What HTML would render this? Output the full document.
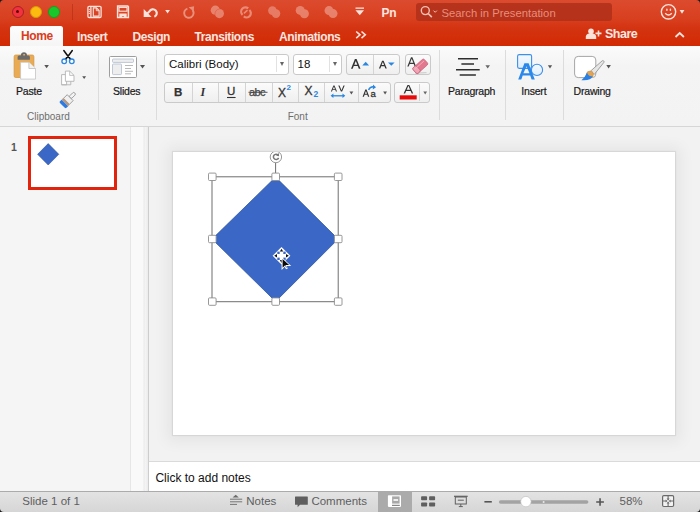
<!DOCTYPE html>
<html><head><meta charset="utf-8">
<style>
*{margin:0;padding:0;box-sizing:border-box}
html,body{width:700px;height:512px;overflow:hidden;background:#1A1A1A;font-family:"Liberation Sans",sans-serif}
.a{position:absolute}
.t{position:absolute;line-height:1;white-space:nowrap}
#top{left:0;top:0;width:700px;height:46px;background:linear-gradient(#DC4B2F,#D8401F 40%,#D43412 60%,#D12A03);border-radius:4px 4px 0 0}
.tab{font-weight:bold;font-size:12px;letter-spacing:-0.4px;color:#FBE6E0;top:30.5px}
#ribbon{left:0;top:46px;width:700px;height:80px;background:linear-gradient(#FBFBFB,#F6F6F6 14px,#F4F4F4 20px,#F3F3F3)}
.lbl{font-size:10.5px;letter-spacing:-0.2px;color:#1a1a1a;top:85.6px;-webkit-text-stroke:0.2px #1a1a1a}
.glbl{font-size:10px;color:#6E6E6E;top:111.5px}
.sep{width:1px;background:#DCDCDC}
.box{background:#fff;border:1px solid #C9C9C9;border-radius:3px}
.btn{background:linear-gradient(#FBFBFB,#EFEFEF);border:1px solid #CACACA;border-radius:3px}
.tri{width:0;height:0;border-left:2.5px solid transparent;border-right:2.5px solid transparent;border-top:4px solid #666}
</style></head><body>
<!-- title + tabs -->
<div id="top" class="a"></div>
<!-- traffic lights -->
<div class="a" style="left:11.5px;top:5.5px;width:12px;height:12px;border-radius:50%;background:#F4323D;border:1px solid #A51F27"></div>
<div class="a" style="left:15.8px;top:9.8px;width:3.4px;height:3.4px;border-radius:50%;background:#5A0808"></div>
<div class="a" style="left:29.7px;top:5.5px;width:12px;height:12px;border-radius:50%;background:#FDBB0F;border:1px solid #D69A10"></div>
<div class="a" style="left:48px;top:5.5px;width:12px;height:12px;border-radius:50%;background:#1AC72A;border:1px solid #16A020"></div>
<div class="a" style="left:72px;top:4px;width:1px;height:16px;background:rgba(150,30,10,0.35)"></div>


<!-- title bar icons -->
<svg class="a" style="left:0;top:0" width="700" height="26" viewBox="0 0 700 26">
 <g fill="none" stroke="#FBE3DC" stroke-width="1.3">
  <!-- doc/sidebar icon -->
  <rect x="87.9" y="6.3" width="13.2" height="11.2" rx="1.2"/>
  <line x1="90.9" y1="6.3" x2="90.9" y2="17.5"/>
  <path d="M93.3 7.9h3.2l2.6 2.6v5.6h-5.8z" stroke-width="1.1"/>
  <path d="M96.3 7.9v2.8h2.8" stroke-width="0.9"/>
  <!-- save -->
  <path d="M117.6 6.1h10.2l0.6 0.6v10.9h-10.8z" stroke-width="1.5"/>
  <rect x="119" y="7.4" width="8" height="3.8" stroke-width="1.1"/>
 </g>
 <g fill="#FBE3DC">
  <circle cx="89.3" cy="9.3" r="0.65"/><circle cx="89.3" cy="11.4" r="0.65"/><circle cx="89.3" cy="13.4" r="0.65"/>
  <path d="M119.3 17.6v-4.2h7.4v4.2h-2.6v-1.4h-2.2v1.4z"/>
 </g>
 <path d="M120.4 17.4v-2.9h5.2v2.9" fill="none" stroke="#C8381B" stroke-width="0"/>
 <!-- undo -->
 <path d="M147.2 13.6l2.2-2.2a3.9 3.9 0 1 1 5 5.4" fill="none" stroke="#FBE3DC" stroke-width="2.1"/>
 <path d="M143.7 8.9 v8 h7.9z" fill="#FBE3DC"/>
 <path d="M165.2 10.1h4.7l-2.35 3.5z" fill="#FBE3DC"/>
 <!-- redo (disabled) -->
 <path d="M187.4 8.6 a4.7 4.7 0 1 0 5.2 1.6" fill="none" stroke="#E8907C" stroke-width="1.9"/>
 <path d="M188.6 7.2 l5.5 -1 l-0.4 5.2z" fill="#E8907C"/>
 <!-- circles icons (disabled) -->
 <g fill="#F2A898" opacity="0.62">
  <circle cx="215.3" cy="10.2" r="4.6"/>
  <circle cx="219.4" cy="13.6" r="4.6"/>
 </g>
 <path d="M215.1 14.7a4.6 4.6 0 0 1 4.4 -5.6" fill="none" stroke="#D9482C" stroke-width="0.7" opacity="0.6"/>
 <g fill="none" stroke="#F2A898" stroke-width="2.2" opacity="0.7">
  <path d="M242.6 14.8a4.2 4.2 0 0 1 5.6 -6.4"/>
  <path d="M248.6 8.8a4.2 4.2 0 0 1 -5.6 6.4" transform="translate(0.8,1.2)"/>
 </g>
 <path d="M243.9 13.3l3.6 -3.2" stroke="#F2A898" stroke-width="1.6" opacity="0.7"/>
 <g fill="#F2A898" opacity="0.55">
  <circle cx="272.4" cy="10.6" r="4.3"/>
  <circle cx="276" cy="13.6" r="4.3"/>
 </g>
 <g fill="#F2A898" opacity="0.6">
  <circle cx="300.2" cy="10.4" r="4.5"/>
  <circle cx="304.4" cy="13.8" r="4.5"/>
 </g>
 <g fill="#F2A898" opacity="0.62">
  <circle cx="329" cy="10.6" r="4.5"/>
  <circle cx="333" cy="13.6" r="4.5"/>
 </g>
 <!-- customize -->
 <rect x="355.5" y="7.5" width="8.5" height="1.3" fill="#FBE3DC"/>
 <path d="M355.5 10.2h8.5l-4.25 5z" fill="#FBE3DC"/>
 <!-- search box -->
 <rect x="416" y="3" width="196" height="18" rx="3" fill="#B0301A" opacity="0.88"/>
 <circle cx="425.3" cy="10.6" r="4" fill="none" stroke="#F2C0B4" stroke-width="1.4"/>
 <path d="M428.2 13.5l3.6 3.6" stroke="#F2C0B4" stroke-width="1.6"/>
 <path d="M433.5 10.6l1.7 1.7l1.7-1.7" fill="none" stroke="#F2C0B4" stroke-width="1"/>
 <!-- smiley -->
 <circle cx="668.5" cy="11.8" r="7.2" fill="none" stroke="#FBE3DC" stroke-width="1.4"/>
 <ellipse cx="666.9" cy="9.7" rx="0.75" ry="1.3" fill="#FBE3DC"/><ellipse cx="670.4" cy="9.7" rx="0.75" ry="1.3" fill="#FBE3DC"/>
 <path d="M665.2 13.2q3.3 3.6 6.6 0" fill="none" stroke="#FBE3DC" stroke-width="1.3"/>
 <path d="M679.6 10h4.8l-2.4 3.8z" fill="#FBE3DC"/>
</svg>
<div class="t" style="left:381.5px;top:6.9px;font-size:12px;font-weight:bold;color:#FBE6E0;letter-spacing:-0.3px">Pn</div>
<div class="t" style="left:441.4px;top:7.5px;font-size:11.3px;color:#E68E7C">Search in Presentation</div>

<!-- tabs -->
<div class="a" style="left:10px;top:26px;width:53px;height:21px;background:linear-gradient(#FDFDFD,#F5F5F5);border-radius:2.5px 2.5px 0 0"></div>
<div class="t tab" style="left:21px;top:30.3px;color:#DB3C1C">Home</div>
<div class="t tab" style="left:77px">Insert</div>
<div class="t tab" style="left:132.4px">Design</div>
<div class="t tab" style="left:194.4px">Transitions</div>
<div class="t tab" style="left:279px">Animations</div>
<svg class="a" style="left:350px;top:26px" width="350" height="20" viewBox="350 26 350 20">
 <path d="M356.2 31.5l3.8 3.3l-3.8 3.3M361.5 31.5l3.8 3.3l-3.8 3.3" fill="none" stroke="#FBE3DC" stroke-width="1.6"/>
 <!-- share person -->
 <circle cx="591" cy="31.2" r="2.8" fill="#FBE3DC"/>
 <path d="M585.8 39v-2.2q0-2.8 3-3.4h4.4q3 .6 3 3.4V39z" fill="#FBE3DC"/>
 <path d="M595.5 33.4h6M598.5 30.4v6" stroke="#FBE3DC" stroke-width="1.6"/>
 <path d="M675.5 37l4.2-4l4.2 4" fill="none" stroke="#FBE3DC" stroke-width="1.8"/>
</svg>
<div class="t" style="left:605px;top:28px;font-size:12.5px;font-weight:bold;letter-spacing:-0.5px;color:#FBE6E0">Share</div>

<!-- ribbon -->
<div id="ribbon" class="a"></div>
<div class="a" style="left:0;top:125.5px;width:700px;height:1px;background:#D6D6D6"></div>
<div class="a sep" style="left:98px;top:50px;height:70px"></div>
<div class="a sep" style="left:156px;top:50px;height:70px"></div>
<div class="a sep" style="left:439px;top:50px;height:70px"></div>
<div class="a sep" style="left:505px;top:50px;height:70px"></div>
<div class="a sep" style="left:563px;top:50px;height:70px"></div>

<svg class="a" style="left:0;top:46px" width="700" height="80" viewBox="0 46 700 80">
 <!-- paste clipboard -->
 <rect x="14.1" y="55" width="19.8" height="22.5" rx="1.6" fill="#EAAB55" stroke="#D39540" stroke-width="0.7"/>
 <path d="M17.6 59.3v-2.3q0-1.6 1.6-1.6h1.6q0.3-3.1 3.15-3.1t3.15 3.1h1.3q1.5 0 1.5 1.6v2.3q0 0.5-0.5 0.5h-11.3q-0.5 0-0.5-0.5z" fill="#6B6B6B"/>
 <rect x="23.2" y="54" width="1.8" height="1.5" rx="0.5" fill="#E6B070"/>
 <path d="M20.6 62.2h8.3l6.6 6.6v10.3h-14.9z" fill="#fff" stroke="#C4C4C4" stroke-width="0.8"/>
 <path d="M28.9 62.2v6.3h6.6" fill="#F2F2F2" stroke="#BDBDBD" stroke-width="0.8"/>
 <path d="M44.3 65h4.6l-2.3 3.2z" fill="#555"/>
 <!-- scissors -->
 <path d="M63.9 50.6q2.4 3.6 6.8 8.8M72.2 50.6q-2.4 3.6 -6.8 8.8" fill="none" stroke="#111" stroke-width="1.7" stroke-linecap="round"/>
 <circle cx="64.2" cy="61.3" r="2.3" fill="#fff" stroke="#2A86E0" stroke-width="1.35"/>
 <circle cx="71.8" cy="61.3" r="2.3" fill="#fff" stroke="#2A86E0" stroke-width="1.35"/>
 <!-- copy -->
 <path d="M61.6 74.6h5v10.2h-5z" fill="#fff" stroke="#B3B3B3" stroke-width="0.9"/>
 <path d="M61.6 84.8h9.2v-3.5" fill="none" stroke="#B3B3B3" stroke-width="0.9"/>
 <path d="M65.4 71.1h4.3l4.3 4.3v5.9h-8.6z" fill="#fff" stroke="#B3B3B3" stroke-width="0.9"/>
 <path d="M69.7 71.1v4.3h4.3" fill="none" stroke="#B3B3B3" stroke-width="0.8"/>
 <path d="M82.2 76.2h3.9l-1.95 2.8z" fill="#555"/>
 <!-- format painter -->
 <g transform="translate(67.6,100.2) rotate(45)">
  <rect x="-1.6" y="-10.2" width="3.2" height="6.8" rx="1.5" fill="#F4F4F4" stroke="#8E8E8E" stroke-width="0.8"/>
  <path d="M-4.2 -3.6h8.4v5.2h-8.4z" fill="#F0F0F0" stroke="#8E8E8E" stroke-width="0.8"/>
  <rect x="-4.6" y="1.6" width="9.2" height="2.2" fill="#B99A80"/>
  <path d="M-4.6 3.8h9.2v2.4q0 1.2-1.2 1.2h-6.8q-1.2 0-1.2-1.2z" fill="#2F7AE0"/>
 </g>
 <!-- slides icon -->
 <rect x="109.5" y="56.5" width="27" height="21" rx="1" fill="#fff" stroke="#9E9E9E" stroke-width="1"/>
 <rect x="112.5" y="59" width="21" height="3.4" rx="0.8" fill="#EEEEEE" stroke="#A9B5C9" stroke-width="0.7"/>
 <rect x="112.5" y="64" width="9" height="10.6" rx="0.8" fill="#EEEEEE" stroke="#A9B5C9" stroke-width="0.7"/>
 <g stroke="#A6A6A6" stroke-width="0.8"><path d="M125 65.5h8M125 68.5h6M125 71.3h8M125 73.8h6"/></g>
 <path d="M140 65h5l-2.5 3.6z" fill="#555"/>
 <!-- paragraph -->
 <g stroke="#2E2E2E" stroke-width="1.5"><path d="M458 58.8h20M461.4 64h12.6M456 69.8h23.7M459.7 75.1h16.2"/></g>
 <path d="M485.4 65.2h4.6l-2.3 3.4z" fill="#666"/>
 <!-- insert icon -->
 <defs><linearGradient id="lb" x1="0" y1="0" x2="0" y2="1"><stop offset="0" stop-color="#F4F9FE"/><stop offset="1" stop-color="#DDEEFC"/></linearGradient></defs>
 <rect x="517.6" y="54.6" width="14" height="13.8" rx="1.6" fill="url(#lb)" stroke="#3C8FEA" stroke-width="1.1"/>
 <circle cx="537" cy="69.9" r="5.6" fill="url(#lb)" stroke="#3C8FEA" stroke-width="1.1"/>
 <path d="M518.2 79.6L524.4 63.2H528.6L534.8 79.6H531.6L530.2 75.4H522.7L521.3 79.6zM526.5 66.2L523.4 73.2H529.5z" fill="#2A88EA" fill-rule="evenodd"/>
 <path d="M547.9 65.2h4.2l-2.1 3.4z" fill="#555"/>
 <!-- drawing icon -->
 <rect x="574.6" y="56.4" width="21.2" height="21.2" rx="3.6" fill="#fff" stroke="#A5A5A5" stroke-width="1"/>
 <path d="M590.2 71.4l12-10.6a1.2 1.2 0 0 1 1.7 1.6l-9.6 12z" fill="#E6E6E6" stroke="#8C8C8C" stroke-width="0.8"/>
 <circle cx="590" cy="74.4" r="3.4" fill="#E0A457" stroke="#C98A3E" stroke-width="0.5"/>
 <path d="M587 72.6q1.2 4.2 5.6 3.6q-1.6 4.8-11.2 4q3.6-2.4 5.6-7.6z" fill="#2B80E2"/>
 <path d="M606.3 65h4.6l-2.3 3.6z" fill="#555"/>
</svg>
<div class="t lbl" style="left:16px">Paste</div>
<div class="t lbl" style="left:113px">Slides</div>
<div class="t lbl" style="left:448px">Paragraph</div>
<div class="t lbl" style="left:521.3px">Insert</div>
<div class="t lbl" style="left:573.6px">Drawing</div>
<div class="t glbl" style="left:27px">Clipboard</div>
<div class="t glbl" style="left:287.7px">Font</div>

<!-- font controls -->
<div class="a box" style="left:164px;top:53.5px;width:125px;height:21px"></div>
<div class="a" style="left:275.5px;top:56px;width:1px;height:16px;background:#E2E2E2"></div>
<div class="a tri" style="left:280px;top:62px;border-top-color:#666"></div>
<div class="t" style="left:169px;top:59px;font-size:11.5px;color:#111">Calibri (Body)</div>
<div class="a box" style="left:293px;top:53.5px;width:48.5px;height:21px"></div>
<div class="a" style="left:328.5px;top:56px;width:1px;height:16px;background:#E2E2E2"></div>
<div class="a tri" style="left:332.6px;top:62px"></div>
<div class="t" style="left:297.5px;top:59px;font-size:11.5px;color:#111">18</div>
<div class="a btn" style="left:346px;top:53.5px;width:53.5px;height:21px"></div>
<div class="a" style="left:372.5px;top:54.5px;width:1px;height:19px;background:#D4D4D4"></div>
<div class="a btn" style="left:404.5px;top:53.5px;width:26px;height:21px"></div>
<div class="a btn" style="left:164px;top:82px;width:226.5px;height:20.5px"></div>
<div class="a" style="left:191.5px;top:83px;width:1px;height:18.5px;background:#D4D4D4"></div>
<div class="a" style="left:217.5px;top:83px;width:1px;height:18.5px;background:#D4D4D4"></div>
<div class="a" style="left:244.5px;top:83px;width:1px;height:18.5px;background:#D4D4D4"></div>
<div class="a" style="left:271.5px;top:83px;width:1px;height:18.5px;background:#D4D4D4"></div>
<div class="a" style="left:297.5px;top:83px;width:1px;height:18.5px;background:#D4D4D4"></div>
<div class="a" style="left:324.3px;top:83px;width:1px;height:18.5px;background:#D4D4D4"></div>
<div class="a" style="left:357.5px;top:83px;width:1px;height:18.5px;background:#D4D4D4"></div>
<div class="a btn" style="left:394.4px;top:82px;width:36px;height:20.5px"></div>
<div class="a" style="left:418.6px;top:84px;width:1px;height:16.5px;background:#D4D4D4"></div>
<svg class="a" style="left:150px;top:46px" width="300" height="80" viewBox="150 46 300 80">
 <!-- grow A -->
 <path d="M351 68.8l3.9-9.7h1.7l3.9 9.7h-1.7l-1.05-2.7h-4l-1.05 2.7zm3.3-4h3l-1.5-3.9z" fill="#333"/>
 <path d="M362.3 65.4h6.8l-3.4-3.6z" fill="#2A86E0"/>
 <path d="M378.9 68.4l3.2-7.6h1.5l3.2 7.6h-1.45l-0.85-2.2h-3.3l-0.85 2.2zm2.75-3.3h2.4l-1.2-3.1z" fill="#333"/>
 <path d="M388 62.4h6.6l-3.3 3.3z" fill="#2A86E0"/>
 <!-- clear formatting -->
 <path d="M407.3 66.5l3.7-9.2h1.4l3.7 9.2h-1.4l-1-2.6h-4l-1 2.6zm2.8-3.7h3.2l-1.6-4.1z" fill="#3A3A3A"/>
 <path d="M415 73.2l11.5-0.6" stroke="#CFCFCF" stroke-width="1.2"/>
 <g transform="translate(420.3,66.3) rotate(-42)">
  <rect x="-7.6" y="-3.7" width="15.2" height="7.4" rx="1.6" fill="#E2788F" stroke="#C4566E" stroke-width="0.6"/>
  <rect x="-7.6" y="-3.7" width="5" height="7.4" rx="1.6" fill="#EFA5B5" stroke="#C4566E" stroke-width="0.6"/>
  <path d="M-6.5 -1.5h13" stroke="#F3B6C3" stroke-width="0.8"/>
 </g>
 <!-- B I U abc -->
 <text x="174" y="96" font-family="Liberation Sans" font-weight="bold" font-size="11.5" fill="#333" stroke="#333" stroke-width="0.25">B</text>
 <text x="200.6" y="96" font-family="Liberation Serif" font-style="italic" font-weight="bold" font-size="12" fill="#333">I</text>
 <text x="227" y="95.3" font-family="Liberation Sans" font-size="11.5" fill="#333" stroke="#333" stroke-width="0.3">U</text>
 <path d="M227 97.5h8.6" stroke="#333" stroke-width="1.1"/>
 <text x="249" y="96" font-family="Liberation Sans" font-size="11" fill="#444" stroke="#444" stroke-width="0.25" letter-spacing="-0.6">abc</text>
 <path d="M248.5 92.3h19" stroke="#444" stroke-width="0.9"/>
 <text x="278" y="97" font-family="Liberation Sans" font-size="12" fill="#333" stroke="#333" stroke-width="0.3">X</text>
 <text x="286.6" y="90" font-family="Liberation Sans" font-weight="bold" font-size="8" fill="#2A86E0">2</text>
 <text x="304.6" y="94.5" font-family="Liberation Sans" font-size="12" fill="#333" stroke="#333" stroke-width="0.3">X</text>
 <text x="313.4" y="97.3" font-family="Liberation Sans" font-weight="bold" font-size="8.5" fill="#2A86E0">2</text>
 <!-- AV -->
 <path d="M330.9 91.4l2.5-6h1.1l2.5 6h-1.1l-0.65-1.6h-2.6l-0.65 1.6zm2.1-2.5h1.9l-0.95-2.4z" fill="#333"/>
 <path d="M338.3 85.4h1.2l2 4.8l2-4.8h1.2l-2.6 6h-1.2z" fill="#333"/>
 <path d="M332.5 95.8h11" stroke="#2A86E0" stroke-width="1.3"/>
 <path d="M330.6 95.8l2.8-2.3v4.6zM345.3 95.8l-2.8-2.3v4.6z" fill="#2A86E0"/>
 <path d="M349.5 91.6h3.8l-1.9 2.8z" fill="#555"/>
 <!-- Aa -->
 <path d="M362.6 96.8l2.7-7.4h1.3l2.7 7.4h-1.3l-0.7-2h-2.7l-0.7 2zm2.3-3h2.1l-1.05-2.9z" fill="#333"/>
 <text x="370.6" y="96.8" font-family="Liberation Sans" font-size="9.5" fill="#333" stroke="#333" stroke-width="0.3">a</text>
 <path d="M368.6 90q1.4-3.6 5.2-3.2" fill="none" stroke="#2A86E0" stroke-width="1.4"/>
 <path d="M373 84.4l3 2.8l-3.2 2.2z" fill="#2A86E0"/>
 <path d="M383.2 91.6h3.8l-1.9 2.8z" fill="#555"/>
 <!-- font color -->
 <path d="M403.6 93.6l3.9-8.6h1.8l3.9 8.6h-1.5l-1.05-2.5h-4.5l-1.05 2.5zm3.1-3.8h3.4l-1.7-4z" fill="#333"/>
 <rect x="399.7" y="95.3" width="17" height="4.2" fill="#E80A0A"/>
 <path d="M423.3 91.6h3.8l-1.9 2.8z" fill="#666"/>
</svg>

<!-- left pane -->
<div class="a" style="left:0;top:126.5px;width:130.5px;height:364px;background:#F5F5F5"></div>
<div class="a" style="left:130px;top:126.5px;width:1px;height:364px;background:#E6E6E6"></div>
<div class="a" style="left:131px;top:126.5px;width:12.5px;height:364px;background:#F9F9F9"></div>
<div class="a" style="left:143px;top:126.5px;width:2px;height:364px;background:linear-gradient(90deg,#F3F3F3,#EDEDED)"></div>
<div class="a" style="left:145px;top:126.5px;width:3px;height:364px;background:linear-gradient(90deg,#F5F5F5,#EBEBEB)"></div>
<div class="a" style="left:148px;top:126.5px;width:1px;height:364px;background:#CDCDCD"></div>
<div class="t" style="left:11px;top:142.2px;font-size:10.5px;font-weight:bold;color:#555">1</div>
<div class="a" style="left:28px;top:136px;width:89px;height:54px;border:3px solid #E1240B;background:#fff"></div>
<svg class="a" style="left:37px;top:142.5px" width="23" height="23" viewBox="0 0 23 23"><path d="M11.2 0.6L21.8 11.3L11.2 22L0.6 11.3z" fill="#3B68C6" stroke="#2F559B" stroke-width="0.6"/></svg>
<!-- slide area -->
<div class="a" style="left:149px;top:126.5px;width:551px;height:335px;background:#F2F2F2"></div>
<div class="a" style="left:173px;top:151.5px;width:502px;height:283.5px;background:#fff;box-shadow:0 0 1px 1px rgba(0,0,0,0.07),0 1px 14px 6px rgba(0,0,0,0.055)"></div>
<svg class="a" style="left:173px;top:151.5px" width="503" height="284" viewBox="173 151.5 503 284">
 <path d="M275.6 176.6L338.1 238.6L275.6 301L212.1 238.6z" fill="#3B68C6" stroke="#2F559B" stroke-width="0.8"/>
 <g fill="none" stroke="#6E6E6E" stroke-width="1">
  <rect x="212" y="176.3" width="126.2" height="124.9"/>
  <line x1="275.6" y1="162" x2="275.6" y2="176"/>
 </g>
 <g fill="#fff" stroke="#8D8D8D" stroke-width="0.9">
  <rect x="208.5" y="172.6" width="7.6" height="7.4" rx="1"/>
  <rect x="271.9" y="172.6" width="7.6" height="7.4" rx="1"/>
  <rect x="334.4" y="172.6" width="7.6" height="7.4" rx="1"/>
  <rect x="208.5" y="234.8" width="7.6" height="7.4" rx="1"/>
  <rect x="334.4" y="234.8" width="7.6" height="7.4" rx="1"/>
  <rect x="208.5" y="297.4" width="7.6" height="7.4" rx="1"/>
  <rect x="271.9" y="297.4" width="7.6" height="7.4" rx="1"/>
  <rect x="334.4" y="297.4" width="7.6" height="7.4" rx="1"/>
  <circle cx="275.9" cy="156.5" r="5.7"/>
 </g>
 <path d="M278.6 157.4a2.7 2.7 0 1 1 -0.6 -3" fill="none" stroke="#777" stroke-width="1.5"/>
 <path d="M278.9 152.6l0.2 3.2l-3 -0.6z" fill="#777"/>
 <!-- move cursor -->
 <path d="M281.5 246.6L290.4 255.3L281.5 264.1L272.6 255.3z" fill="#fff"/>
 <g fill="#3A67C5">
  <rect x="277.3" y="251.1" width="2.4" height="2.4"/>
  <rect x="283.3" y="251.1" width="2.4" height="2.4"/>
  <rect x="277.3" y="257.1" width="2.4" height="2.4"/>
  <rect x="283.3" y="257.1" width="2.4" height="2.4"/>
 </g>
 <g fill="#111">
  <path d="M281.5 248.2l1.7 2.8h-3.4z"/>
  <path d="M281.5 262.4l1.7 -2.8h-3.4z"/>
  <path d="M274.2 255.3l2.8 -1.7v3.4z"/>
  <path d="M288.8 255.3l-2.8 -1.7v3.4z"/>
 </g>
 <path d="M281.6 256.4v13l3.2-3.2l1.2 2.6l1.8-0.8l-1.2-2.5h4.6z" fill="#fff"/>
 <path d="M282.6 258.6v8.6l2.5-2.5l1.2 2.6l0.4-0.2l-1.2-2.6h3.6z" fill="#0A0A0A"/>
</svg>
<!-- notes -->
<div class="a" style="left:149px;top:461px;width:551px;height:1px;background:#DADADA"></div>
<div class="a" style="left:149px;top:462px;width:551px;height:28.5px;background:#fff"></div>
<div class="t" style="left:155.4px;top:471.8px;font-size:12px;color:#111">Click to add notes</div>
<!-- status bar -->
<div class="a" style="left:0;top:490.5px;width:700px;height:1px;background:#ABABAB"></div>
<div class="a" style="left:0;top:491.5px;width:700px;height:20.5px;background:linear-gradient(#E3E3E3,#D6D6D6);border-radius:0 0 4px 4px"></div>
<div class="a" style="left:378.2px;top:491.5px;width:33.8px;height:20.5px;background:#ABABAB"></div>
<div class="t" style="left:22.3px;top:495.9px;font-size:11.5px;color:#5E5E5E">Slide 1 of 1</div>
<div class="t" style="left:246.3px;top:496px;font-size:11.5px;color:#5E5E5E">Notes</div>
<div class="t" style="left:311.4px;top:496px;font-size:11.5px;color:#5E5E5E">Comments</div>
<div class="t" style="left:619.5px;top:496px;font-size:11.5px;color:#5E5E5E">58%</div>
<svg class="a" style="left:220px;top:490px" width="480" height="22" viewBox="220 490 480 22">
 <!-- notes icon -->
 <path d="M232.6 497.6l3.1-2.8l3.1 2.8z" fill="#6A6A6A"/>
 <g stroke="#6A6A6A" stroke-width="0.9"><path d="M230 499.2h12.2M230 501.8h12.2M230 504.4h7"/></g>
 <!-- comments icon -->
 <path d="M295.5 496.6h11.8q0.5 0 0.5 0.5v7.2q0 0.5-0.5 0.5h-7.3l-2.4 2.4v-2.4h-2.1q-0.5 0-0.5-0.5v-7.2q0-0.5 0.5-0.5z" fill="#5F5F5F"/>
 <!-- normal view -->
 <rect x="387.9" y="495.2" width="13.1" height="11.7" rx="0.8" fill="#fff"/>
 <rect x="392.1" y="496.4" width="7.5" height="7.2" fill="#A8A8A8"/>
 <rect x="393.5" y="499.2" width="4.6" height="1.6" fill="#fff"/>
 <rect x="392" y="504.8" width="7.8" height="1.1" fill="#7A7A7A"/>
 <!-- sorter -->
 <g fill="#5F5F5F"><rect x="421.1" y="496.2" width="6" height="4" rx="0.8"/><rect x="429.1" y="496.2" width="6" height="4" rx="0.8"/><rect x="421.1" y="502.5" width="6" height="4" rx="0.8"/><rect x="429.1" y="502.5" width="6" height="4" rx="0.8"/></g>
 <!-- presenter -->
 <path d="M454 496.3h13.7" stroke="#5F5F5F" stroke-width="1.2"/>
 <rect x="455.3" y="497" width="11" height="7" fill="none" stroke="#5F5F5F" stroke-width="1"/>
 <path d="M457.8 500.2h6" stroke="#5F5F5F" stroke-width="1"/>
 <path d="M460.8 504v2.4M458.8 506.6h4" stroke="#5F5F5F" stroke-width="1"/>
 <!-- zoom -->
 <path d="M484.4 501.8h7.4" stroke="#555" stroke-width="1.6"/>
 <rect x="498.9" y="500.2" width="89.5" height="3.6" rx="1.8" fill="#A3A3A3"/>
 <circle cx="543.6" cy="502" r="1" fill="#E6E6E6"/>
 <circle cx="525.9" cy="501.6" r="5.2" fill="#fff" stroke="#BDBDBD" stroke-width="0.6"/>
 <path d="M596.2 502h7.7M600.05 498.2v7.6" stroke="#555" stroke-width="1.6"/>
 <!-- fit -->
 <rect x="662.6" y="495.6" width="11" height="10.9" rx="1.2" fill="#F2F2F2" stroke="#6A6A6A" stroke-width="1.2"/>
 <g stroke="#6A6A6A" stroke-width="1.1"><path d="M668.1 496v3.4M668.1 506v-3.4M663 501.05h3.2M673.2 501.05h-3.2"/></g>
 <g fill="#6A6A6A">
  <path d="M666.6 498.6h3l-1.5 1.9z"/><path d="M666.6 503.5h3l-1.5 -1.9z"/>
  <path d="M665.6 499.55v3l1.9 -1.5z"/><path d="M670.6 499.55v3l-1.9 -1.5z"/>
 </g>
</svg>
</body></html>
